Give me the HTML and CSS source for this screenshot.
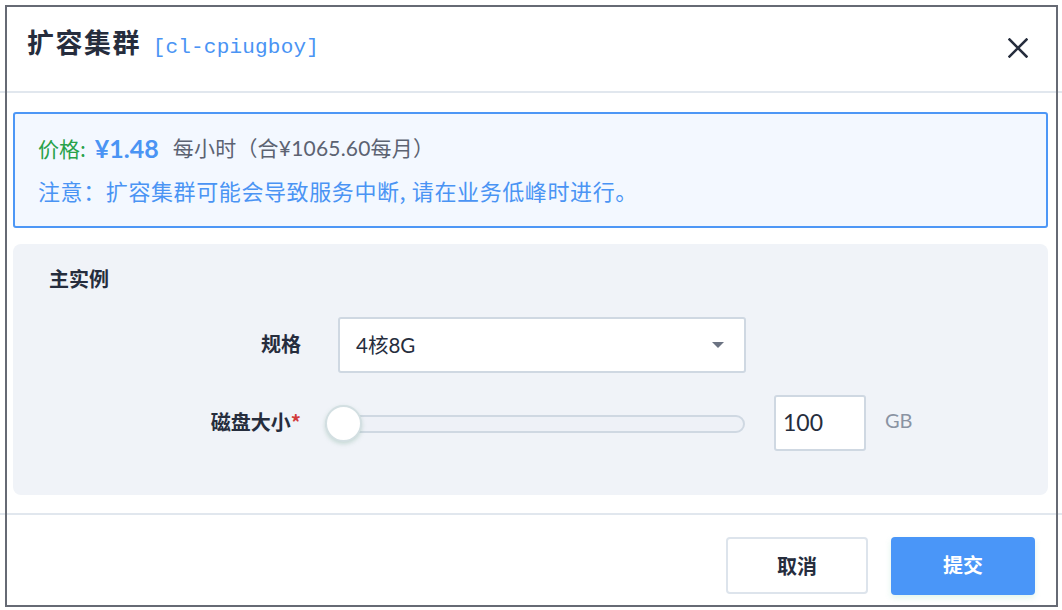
FILE: index.html
```html
<!DOCTYPE html>
<html lang="zh-CN">
<head>
<meta charset="utf-8">
<title>扩容集群</title>
<link rel="stylesheet" href="styles.css">
</head>
<body>
<div class="dialog">
  <header class="dlg-head">
    <h1 class="dlg-title">扩容集群 <span class="cluster-id">[cl-cpiugboy]</span></h1>
    <button class="close-btn" aria-label="关闭">
      <svg width="20" height="20" viewBox="0 0 20 20"><path d="M1.5 1.5 L18.5 18.5 M18.5 1.5 L1.5 18.5" stroke="#262d3d" stroke-width="2.5" stroke-linecap="square" fill="none"/></svg>
    </button>
  </header>
  <div class="dlg-body">
    <div class="alert">
      <div class="price-line"><span class="price-label">价格:</span> <span class="price-value">¥1.48</span> <span class="price-note">每小时（合¥1065.60每月）</span></div>
      <div class="notice-line">注意：扩容集群可能会导致服务中断, 请在业务低峰时进行。</div>
    </div>
    <section class="panel">
      <h2 class="panel-title">主实例</h2>
      <div class="form">
        <div class="form-row">
          <label class="form-label">规格</label>
          <div class="form-ctrl">
            <div class="select">
              <span class="select-text">4核8G</span>
              <span class="caret"></span>
            </div>
          </div>
        </div>
        <div class="form-row">
          <label class="form-label">磁盘大小<span class="req">*</span></label>
          <div class="form-ctrl disk">
            <div class="slider">
              <div class="track"></div>
              <div class="thumb"></div>
            </div>
            <div class="num-input">100</div>
            <span class="unit">GB</span>
          </div>
        </div>
      </div>
    </section>
  </div>
  <footer class="dlg-foot">
    <button class="btn btn-cancel">取消</button>
    <button class="btn btn-primary">提交</button>
  </footer>
  <div class="frame"></div>
</div>
</body>
</html>
```
FILE: styles.css
```css
* { box-sizing: border-box; }
html, body {
  margin: 0;
  padding: 0;
  background: #ffffff;
}
body {
  font-family: "Lato", "Noto Sans CJK SC", sans-serif;
  color: #262d3d;
}
.dialog {
  position: relative;
  width: 1062px;
  height: 610px;
  background: #fff;
  display: flex;
  flex-direction: column;
}
.dlg-head {
  height: 93px;
  flex: none;
  border-bottom: 2px solid #e1e7ee;
  display: flex;
  align-items: flex-start;
  justify-content: space-between;
  padding: 0 34px 0 27px;
}
.dlg-title {
  margin: 0;
  padding-top: 23px;
  font-family: "Noto Sans CJK SC", sans-serif;
  font-size: 27px;
  font-weight: 700;
  line-height: 38px;
  color: #262d3d;
  letter-spacing: 1.5px;
  white-space: nowrap;
}
.cluster-id {
  font-family: "Liberation Mono", monospace;
  font-weight: 400;
  font-size: 21px;
  color: #4a94f4;
  letter-spacing: 0.2px;
  margin-left: 4px;
}
.close-btn {
  margin-top: 38px;
  width: 20px;
  height: 20px;
  padding: 0;
  border: 0;
  background: none;
  display: flex;
}
.dlg-body {
  flex: none;
  padding: 19px 14px 0 13px;
  height: 420px;
}
.alert {
  border: 2px solid #4d97f6;
  border-radius: 3px;
  background: #f3f8ff;
  padding: 13px 24px 15px 23px;
  font-size: 21px;
  line-height: 42px;
}
.price-line {
  height: 42px;
  color: #5c6372;
  white-space: nowrap;
  display: flex;
  align-items: center;
}
.price-label {
  color: #28a24a;
  font-family: "Noto Sans CJK SC", sans-serif;
}
.price-value {
  color: #4a94f4;
  font-weight: 700;
  font-size: 25px;
  margin: 0 14px 0 9px;
}
.price-note { color: #5c6372; letter-spacing: 0.2px; }
.notice-line {
  height: 42px;
  color: #4a94f4;
  font-family: "Noto Sans CJK SC", sans-serif;
  font-size: 22px;
  letter-spacing: 0.6px;
  white-space: nowrap;
}
.panel {
  margin-top: 16px;
  background: #f0f3f8;
  border-radius: 8px;
  padding: 21px 0 44px 36px;
}
.panel-title {
  margin: 0;
  font-family: "Noto Sans CJK SC", sans-serif;
  font-size: 20px;
  font-weight: 700;
  line-height: 28px;
  color: #262d3d;
}
.form {
  margin-top: 24px;
  display: flex;
  flex-direction: column;
  gap: 22px;
}
.form-row {
  display: flex;
  align-items: center;
  height: 56px;
}
.form-label {
  width: 252px;
  text-align: right;
  font-family: "Noto Sans CJK SC", sans-serif;
  font-size: 20px;
  font-weight: 700;
  color: #262d3d;
  margin-right: 37px;
  margin-top: -3px;
}
.req { color: #d23a3a; }
.form-ctrl {
  display: flex;
  align-items: center;
}
.select {
  width: 408px;
  height: 56px;
  background: #fff;
  border: 2px solid #cfd8e2;
  border-radius: 3px;
  display: flex;
  align-items: center;
  justify-content: space-between;
  padding: 0 20px 2px 16px;
  font-size: 20.5px;
  color: #262d3d;
}
.select-text { font-family: "Lato", "Noto Sans CJK SC", sans-serif; }
.caret {
  width: 0;
  height: 0;
  margin-top: 2px;
  border-left: 6px solid transparent;
  border-right: 6px solid transparent;
  border-top: 6px solid #6b7382;
}
.slider {
  position: relative;
  width: 420px;
  height: 40px;
  margin-left: -13px;
  display: flex;
  align-items: center;
}
.track {
  width: 100%;
  height: 18px;
  border: 2px solid #cfd8e2;
  border-radius: 9px;
  background: #eef1f7;
  margin-top: 2px;
}
.thumb {
  position: absolute;
  left: 0;
  top: 2px;
  width: 37px;
  height: 37px;
  border-radius: 50%;
  background: #fff;
  border: 2px solid #d3dfe2;
  box-shadow: 0 2px 4px rgba(120, 170, 150, 0.35);
}
.num-input {
  width: 92px;
  height: 56px;
  margin-left: 29px;
  background: #fff;
  border: 2px solid #cfd8e2;
  border-radius: 3px;
  padding-left: 7px;
  font-size: 23px;
  line-height: 50px;
  color: #262d3d;
}
.unit {
  margin-left: 19px;
  font-size: 20px;
  color: #8a93a3;
  margin-top: -6px;
}
.dlg-foot {
  border-top: 2px solid #e1e7ee;
  flex: 1;
  display: flex;
  justify-content: flex-end;
  align-items: flex-start;
  padding: 22px 27px 0 0;
  gap: 23px;
}
.btn {
  height: 57px;
  border-radius: 4px;
  font-family: "Noto Sans CJK SC", sans-serif;
  font-size: 20px;
  font-weight: 700;
  cursor: pointer;
}
.btn-cancel {
  width: 142px;
  background: #fff;
  border: 2px solid #dde4ec;
  color: #262d3d;
}
.btn-primary {
  width: 144px;
  height: 58px;
  background: #4a96f8;
  border: 0;
  color: #fff;
  padding-bottom: 4px;
  box-shadow: 0 3px 6px rgba(90, 200, 150, 0.18);
}
.frame {
  position: absolute;
  left: 5px;
  top: 5px;
  width: 1053px;
  height: 602px;
  border: 2px solid #666a74;
  pointer-events: none;
}
```
